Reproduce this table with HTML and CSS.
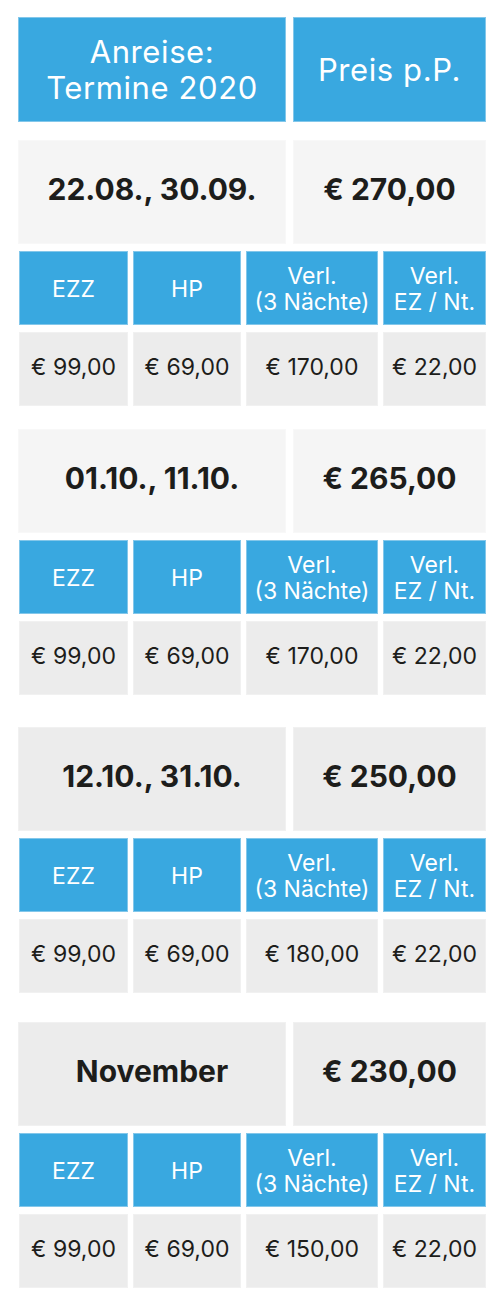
FILE: index.html
```html
<!DOCTYPE html>
<html lang="de">
<head>
    <meta charset="UTF-8">
    <title>Preise 2020</title>
    <link rel="stylesheet" href="styles.css">
</head>
<body>
    <div class="prices">

        <!-- Kopfzeile -->
        <div class="row row--head">
            <div class="cell cell--blue cell--head">Anreise:<br>Termine 2020</div>
            <div class="cell cell--blue cell--head">Preis p.P.</div>
        </div>

        <!-- Termin 1 -->
        <section class="block block--first block--pale">
            <div class="row row--period">
                <div class="cell cell--period">22.08., 30.09.</div>
                <div class="cell cell--period">€ 270,00</div>
            </div>
            <div class="row row--extras">
                <div class="cell cell--blue cell--label">EZZ</div>
                <div class="cell cell--blue cell--label">HP</div>
                <div class="cell cell--blue cell--label">Verl.<br>(3 Nächte)</div>
                <div class="cell cell--blue cell--label">Verl.<br>EZ / Nt.</div>
            </div>
            <div class="row row--extras">
                <div class="cell cell--value">€ 99,00</div>
                <div class="cell cell--value">€ 69,00</div>
                <div class="cell cell--value">€ 170,00</div>
                <div class="cell cell--value">€ 22,00</div>
            </div>
        </section>

        <!-- Termin 2 -->
        <section class="block block--second block--pale">
            <div class="row row--period">
                <div class="cell cell--period">01.10., 11.10.</div>
                <div class="cell cell--period">€ 265,00</div>
            </div>
            <div class="row row--extras">
                <div class="cell cell--blue cell--label">EZZ</div>
                <div class="cell cell--blue cell--label">HP</div>
                <div class="cell cell--blue cell--label">Verl.<br>(3 Nächte)</div>
                <div class="cell cell--blue cell--label">Verl.<br>EZ / Nt.</div>
            </div>
            <div class="row row--extras">
                <div class="cell cell--value">€ 99,00</div>
                <div class="cell cell--value">€ 69,00</div>
                <div class="cell cell--value">€ 170,00</div>
                <div class="cell cell--value">€ 22,00</div>
            </div>
        </section>

        <!-- Termin 3 -->
        <section class="block block--third">
            <div class="row row--period">
                <div class="cell cell--period">12.10., 31.10.</div>
                <div class="cell cell--period">€ 250,00</div>
            </div>
            <div class="row row--extras">
                <div class="cell cell--blue cell--label">EZZ</div>
                <div class="cell cell--blue cell--label">HP</div>
                <div class="cell cell--blue cell--label">Verl.<br>(3 Nächte)</div>
                <div class="cell cell--blue cell--label">Verl.<br>EZ / Nt.</div>
            </div>
            <div class="row row--extras">
                <div class="cell cell--value">€ 99,00</div>
                <div class="cell cell--value">€ 69,00</div>
                <div class="cell cell--value">€ 180,00</div>
                <div class="cell cell--value">€ 22,00</div>
            </div>
        </section>

        <!-- Termin 4 -->
        <section class="block block--fourth">
            <div class="row row--period">
                <div class="cell cell--period">November</div>
                <div class="cell cell--period">€ 230,00</div>
            </div>
            <div class="row row--extras">
                <div class="cell cell--blue cell--label">EZZ</div>
                <div class="cell cell--blue cell--label">HP</div>
                <div class="cell cell--blue cell--label">Verl.<br>(3 Nächte)</div>
                <div class="cell cell--blue cell--label">Verl.<br>EZ / Nt.</div>
            </div>
            <div class="row row--extras">
                <div class="cell cell--value">€ 99,00</div>
                <div class="cell cell--value">€ 69,00</div>
                <div class="cell cell--value">€ 150,00</div>
                <div class="cell cell--value">€ 22,00</div>
            </div>
        </section>

    </div>
</body>
</html>
```

FILE: styles.css
```css
/* General */
body {
    margin: 0;
    background-color: #ffffff;
    color: #1d1d1b;
    font-family: Inter, "Open Sans", sans-serif;
}

.prices {
    width: 468px;
    padding: 17px 18px 0;
}

/* Rows */
.row {
    display: grid;
}

.row--head,
.row--period {
    grid-template-columns: 268px 193px;
    column-gap: 7px;
}

.row--head {
    height: 105px;
}

.row--period {
    height: 104px;
}

.row--extras {
    grid-template-columns: 109px 108px 132px 103px;
    column-gap: 5px;
    height: 74px;
    margin-left: 1px;
}

/* Blocks */
.block {
    display: grid;
    row-gap: 7px;
}

.block--first  { margin-top: 18px; }
.block--second { margin-top: 23px; }
.block--third  { margin-top: 32px; }
.block--fourth { margin-top: 29px; }

/* Cells */
.cell {
    box-sizing: border-box;
    display: flex;
    align-items: center;
    justify-content: center;
    text-align: center;
}

.cell--blue {
    background-color: #39a8e0;
    border: 1px solid #83c7ea;
    color: #ffffff;
}

.cell--head {
    font-size: 31px;
    line-height: 36px;
    letter-spacing: 0.6px;
}

.cell--label {
    font-size: 23px;
    line-height: 26px;
    padding-top: 2px;
}

.cell--period {
    background-color: #ececec;
    border: 1px solid #f1f1f1;
    font-size: 30px;
    font-weight: 700;
    padding-bottom: 6px;
}

.block--pale .cell--period {
    background-color: #f5f5f5;
    border-color: #f8f8f8;
}

.cell--value {
    background-color: #ececec;
    border: 1px solid #f1f1f1;
    font-size: 23px;
    padding-bottom: 4px;
}
```
